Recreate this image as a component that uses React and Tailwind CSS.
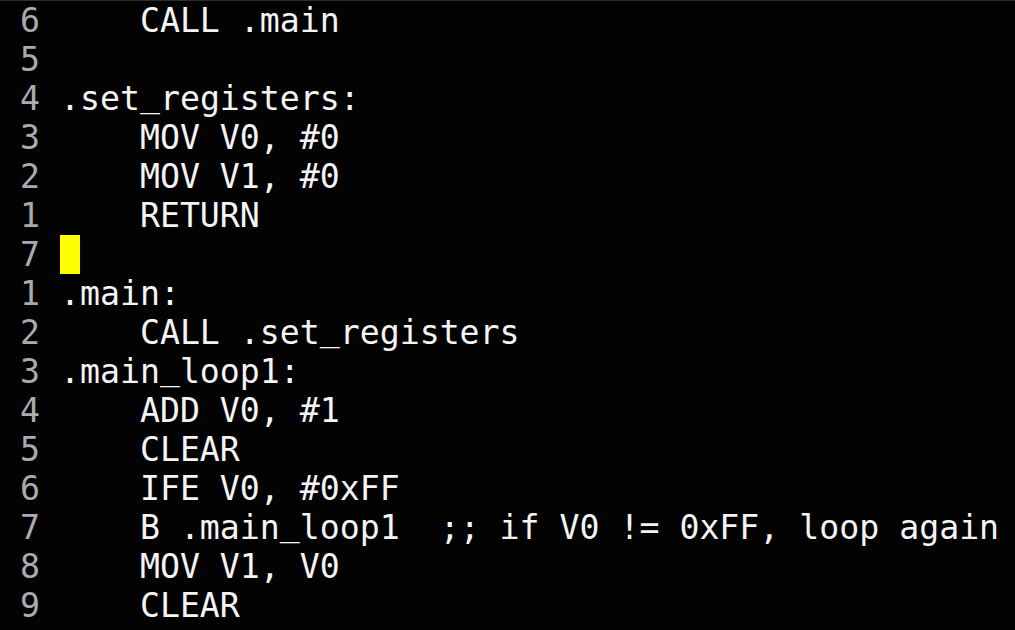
import React from 'react';

const lines = [
  { num: '6', text: '    CALL .main' },
  { num: '5', text: '' },
  { num: '4', text: '.set_registers:' },
  { num: '3', text: '    MOV V0, #0' },
  { num: '2', text: '    MOV V1, #0' },
  { num: '1', text: '    RETURN' },
  { num: '7', text: '', cursor: true },
  { num: '1', text: '.main:' },
  { num: '2', text: '    CALL .set_registers' },
  { num: '3', text: '.main_loop1:' },
  { num: '4', text: '    ADD V0, #1' },
  { num: '5', text: '    CLEAR' },
  { num: '6', text: '    IFE V0, #0xFF' },
  { num: '7', text: '    B .main_loop1  ;; if V0 != 0xFF, loop again' },
  { num: '8', text: '    MOV V1, V0' },
  { num: '9', text: '    CLEAR' },
];

// the terminal draws '_' a bit higher so it stays inside its cell
const renderText = (text) =>
  text.split('_').map((part, i) => (
    <React.Fragment key={i}>
      {i > 0 && <span className="relative -top-[4px]">_</span>}
      {part}
    </React.Fragment>
  ));

const App = () => {
  return (
    <div className="w-[1015px] h-[630px] overflow-hidden bg-[#030303] border-t border-[#2a2d31] font-['DejaVu_Sans_Mono',monospace] text-[33.2px] leading-[39px]">
      {lines.map((line, i) => (
        <div key={i} className="flex h-[39px] whitespace-pre">
          <span className="w-[60px] pl-[20px] text-[#a9abad]">{line.num}</span>
          {line.cursor ? (
            <span className="w-[20px] h-[39px] bg-[#ffff00]" />
          ) : (
            <span className="text-[#f4f4f4]">{renderText(line.text)}</span>
          )}
        </div>
      ))}
    </div>
  );
};

export default App;
